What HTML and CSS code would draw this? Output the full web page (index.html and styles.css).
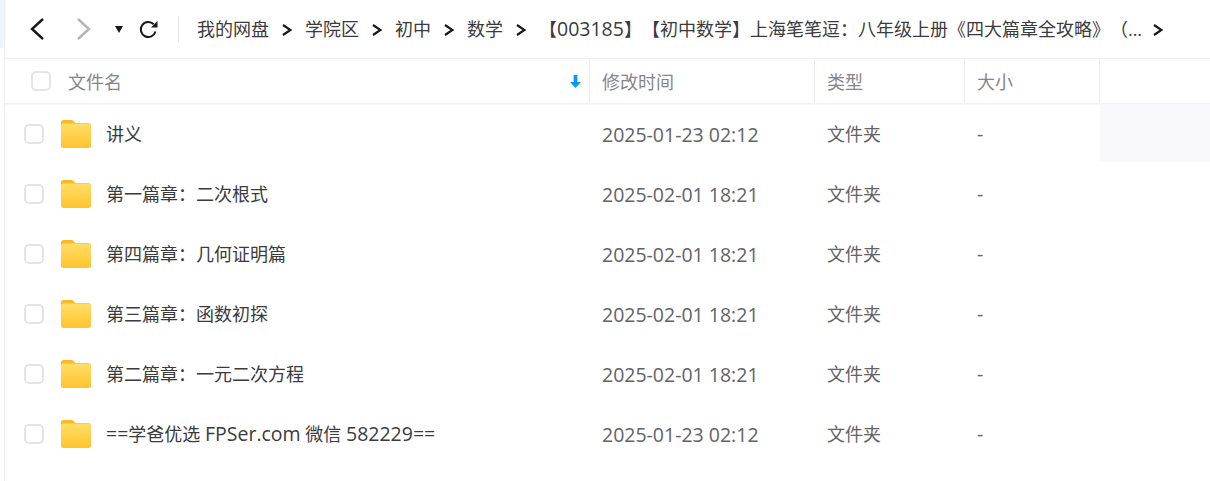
FILE: index.html
```html
<!DOCTYPE html>
<html lang="zh-CN">
<head>
  <meta charset="UTF-8">
  <title>我的网盘</title>
  <link rel="stylesheet" href="styles.css">
</head>
<body>
  <svg class="defs" width="0" height="0">
    <symbol id="folder" viewBox="0 0 30 28">
      <path d="M2 0h8c1.500 0 2 .5 3 1.500s1.500 1.500 3 1.500h11.500c1.400 0 2.500 1.100 2.500 2.500v4h-30v-7c0-1.400 1-2.500 2.500-2.500z" fill="#fdb827"/>
      <rect y="3.500" width="30" height="24.500" rx="2.500" fill="url(#folderFill)"/>
      <linearGradient id="folderFill" x1="0" y1="0" x2="0" y2="1">
        <stop offset="0" stop-color="#ffde66"/>
        <stop offset="1" stop-color="#ffc42e"/>
      </linearGradient>
    </symbol>
    <symbol id="chevron" viewBox="0 0 10 12">
      <path d="M1 1l7.500 5L1 11" fill="none" stroke="#17181c" stroke-width="2.200"/>
    </symbol>
  </svg>

  <div class="side"></div>
  <div class="main">
    <div class="toolbar">
      <svg class="nav-back" width="18" height="24" viewBox="0 0 18 24"><path d="M15 2 4 12l11 10" /></svg>
      <svg class="nav-forward" width="18" height="24" viewBox="0 0 18 24"><path d="M3 2l11 10L3 22" /></svg>
      <span class="caret"></span>
      <svg class="refresh" width="20" height="20" viewBox="0 0 20 20">
        <path d="M16.500 12.500a7.500 7.500 0 1 1-1.800-7.200" />
        <path class="refresh-tip" d="M18.500 2v6.500H12z" />
      </svg>
      <span class="divider"></span>
      <div class="crumbs">
        <span class="crumb">我的网盘</span><svg class="sep"><use href="#chevron"/></svg>
        <span class="crumb">学院区</span><svg class="sep"><use href="#chevron"/></svg>
        <span class="crumb">初中</span><svg class="sep"><use href="#chevron"/></svg>
        <span class="crumb">数学</span><svg class="sep"><use href="#chevron"/></svg>
        <span class="crumb">【<span class="latin">003185</span>】【初中数学】上海笔笔逗：八年级上册《四大篇章全攻略》（...</span><svg class="sep"><use href="#chevron"/></svg>
      </div>
    </div>

    <div class="table-head">
      <div class="col-name head-cell">
        <span class="head-check"></span>
        <span class="head-name">文件名</span>
        <svg class="sort" width="11" height="13" viewBox="0 0 10 12"><path d="M3.300 0h3.400v6.500H10L5 12 0 6.500h3.300z"/></svg>
      </div>
      <div class="col-time head-cell">修改时间</div>
      <div class="col-type head-cell">类型</div>
      <div class="col-size head-cell">大小</div>
      <div class="col-rest"></div>
    </div>

    <div class="row">
      <div class="col-name cell-name"><span class="check"></span><svg class="folder"><use href="#folder"/></svg><span class="file-name">讲义</span></div>
      <div class="col-time cell latin">2025-01-23 02:12</div>
      <div class="col-type cell">文件夹</div>
      <div class="col-size cell latin">-</div>
      <div class="col-rest hover-cell"></div>
    </div>
    <div class="row">
      <div class="col-name cell-name"><span class="check"></span><svg class="folder"><use href="#folder"/></svg><span class="file-name">第一篇章：二次根式</span></div>
      <div class="col-time cell latin">2025-02-01 18:21</div>
      <div class="col-type cell">文件夹</div>
      <div class="col-size cell latin">-</div>
      <div class="col-rest"></div>
    </div>
    <div class="row">
      <div class="col-name cell-name"><span class="check"></span><svg class="folder"><use href="#folder"/></svg><span class="file-name">第四篇章：几何证明篇</span></div>
      <div class="col-time cell latin">2025-02-01 18:21</div>
      <div class="col-type cell">文件夹</div>
      <div class="col-size cell latin">-</div>
      <div class="col-rest"></div>
    </div>
    <div class="row">
      <div class="col-name cell-name"><span class="check"></span><svg class="folder"><use href="#folder"/></svg><span class="file-name">第三篇章：函数初探</span></div>
      <div class="col-time cell latin">2025-02-01 18:21</div>
      <div class="col-type cell">文件夹</div>
      <div class="col-size cell latin">-</div>
      <div class="col-rest"></div>
    </div>
    <div class="row">
      <div class="col-name cell-name"><span class="check"></span><svg class="folder"><use href="#folder"/></svg><span class="file-name">第二篇章：一元二次方程</span></div>
      <div class="col-time cell latin">2025-02-01 18:21</div>
      <div class="col-type cell">文件夹</div>
      <div class="col-size cell latin">-</div>
      <div class="col-rest"></div>
    </div>
    <div class="row">
      <div class="col-name cell-name"><span class="check"></span><svg class="folder"><use href="#folder"/></svg><span class="file-name"><span class="latin">==</span>学爸优选 <span class="latin">FPSer.com</span> 微信 <span class="latin">582229==</span></span></div>
      <div class="col-time cell latin">2025-01-23 02:12</div>
      <div class="col-type cell">文件夹</div>
      <div class="col-size cell latin">-</div>
      <div class="col-rest"></div>
    </div>
  </div>
</body>
</html>
```

FILE: styles.css
```css
* {
  box-sizing: border-box;
}

html, body {
  height: 100%;
}

body {
  margin: 0;
  display: flex;
  overflow: hidden;
  background-color: #fff;
  font-family: "Open Sans", "Noto Sans CJK SC", sans-serif;
  font-size: 18px;
  color: #3b3b3d;
  text-spacing-trim: space-all;
}

.latin {
  font-size: 19.500px;
}

.defs {
  position: absolute;
}

.side {
  width: 5px;
  flex: none;
  border-right: 1px solid #eeeef0;
  background: linear-gradient(#eef6fd 48px, #fff 48px);
}

.main {
  flex: 1;
  min-width: 0;
}

/* toolbar */
.toolbar {
  height: 59px;
  display: flex;
  align-items: center;
  border-bottom: 1px solid #f1f1f3;
}

.nav-back, .nav-forward {
  fill: none;
  stroke-width: 2.400;
}

.nav-back {
  margin-left: 23px;
  stroke: #17181c;
}

.nav-forward {
  margin-left: 29px;
  stroke: #b4b4b6;
}

.caret {
  margin-left: 22px;
  margin-right: 6px;
  border-left: 4.500px solid transparent;
  border-right: 4.500px solid transparent;
  border-top: 7px solid #17181c;
}

.refresh {
  margin-left: 10px;
  fill: none;
  stroke: #17181c;
  stroke-width: 2;
}

.refresh-tip {
  fill: #17181c;
  stroke: none;
}

.divider {
  width: 1px;
  height: 26px;
  margin-left: 19px;
  background-color: #e5e5e7;
}

.crumbs {
  margin-left: 18px;
  display: flex;
  align-items: center;
  white-space: nowrap;
}

.crumb {
  line-height: 26px;
}

.sep {
  width: 10px;
  height: 12px;
  flex: none;
  margin: 2px 13px 0 13px;
}

.sep:last-child {
  margin-left: 11px;
}

/* table */
.table-head {
  height: 45px;
  display: flex;
  border-bottom: 1px solid #f1f1f3;
  box-shadow: 0 1px 1px #f8f8fa;
  color: #85868a;
}

.row {
  height: 60px;
  display: flex;
}

.col-name {
  width: 585px;
}

.col-time {
  width: 225px;
}

.col-type {
  width: 150px;
}

.col-size {
  width: 135px;
}

.col-rest {
  flex: 1;
}

.head-cell {
  display: flex;
  align-items: center;
  padding-left: 12px;
  border-right: 1px solid #ececee;
}

.head-check, .check {
  width: 20px;
  height: 20px;
  flex: none;
  border: 2px solid #e4e4e6;
  border-radius: 5px;
  background-color: #fff;
}

.head-check {
  margin-left: 14px;
}

.head-name {
  margin-left: 17px;
}

.sort {
  margin-left: auto;
  margin-right: 8px;
  fill: #0a96ff;
}

.cell-name {
  display: flex;
  align-items: center;
  padding-left: 19px;
}

.folder {
  width: 30px;
  height: 28px;
  flex: none;
  margin-left: 17px;
}

.file-name {
  margin-left: 15px;
  padding-bottom: 2px;
  white-space: nowrap;
}

.cell {
  display: flex;
  align-items: center;
  padding-left: 12px;
  padding-bottom: 2px;
  color: #626366;
}

.cell.latin {
  padding-bottom: 0;
}

.col-size.latin {
  padding-bottom: 2px;
}

.hover-cell {
  height: 58px;
  background-color: #f9f9fb;
}
```
